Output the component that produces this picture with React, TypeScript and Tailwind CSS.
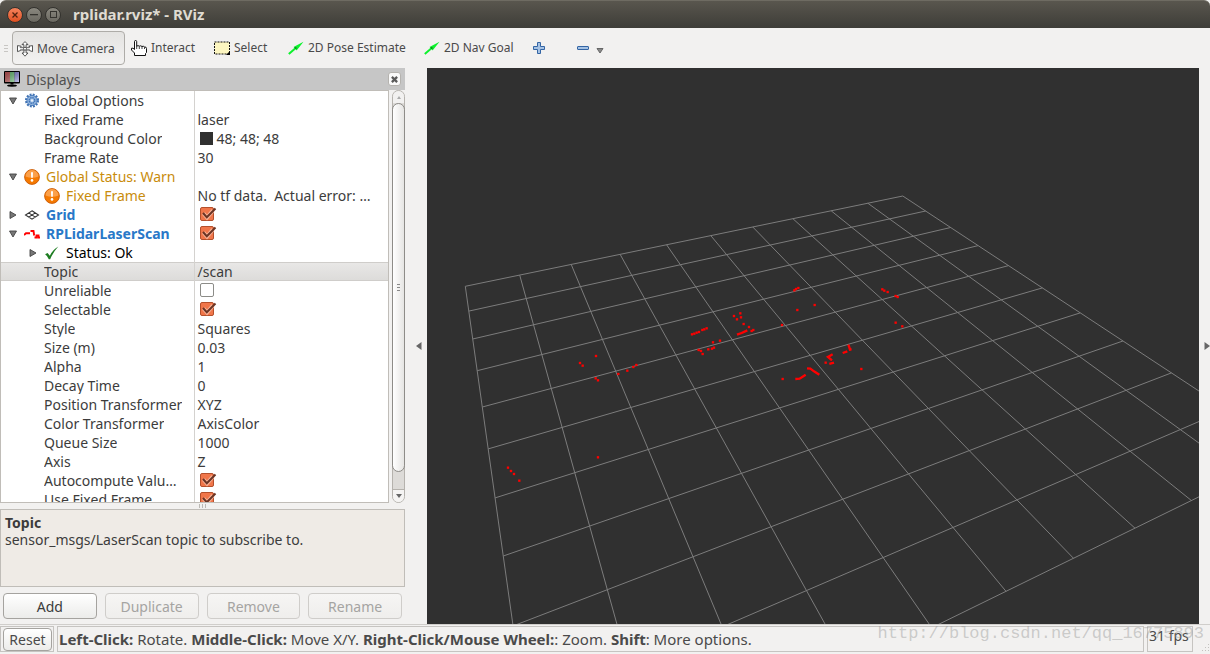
import React from "react";

/* ---------- icons ---------- */

function MoveIcon() {
  return (
    <svg width="16" height="16" viewBox="0 0 16 16" fill="#fff" stroke="#444" strokeWidth="0.9" strokeLinejoin="round" className="shrink-0">
      <path d="M8 .6 11 3.6H9.1V6.6H12.4V5.2H11.8L15.5 4.6V10.6L12.6 9.6V8.9H9.1V12H11L8 15.2 5 12H6.9V8.9H3.4V9.6L.5 10.6V4.6L4.2 5.2 3.2 6.6H6.9V3.6H5Z" />
      <path d="M3.2 6.6h9.6M3.2 8.9h9.6" stroke="#888" strokeWidth="0.7" />
      <circle cx="8" cy="7.7" r="1.5" />
    </svg>
  );
}

function HandIcon() {
  return (
    <svg width="16" height="16" viewBox="0 0 16 16" fill="#fff" stroke="#111" strokeWidth="1" strokeLinejoin="round" className="shrink-0">
      <path d="M3.5 9.500V1.600Q3.500.5 4.600.5T5.700 1.600V6.200Q7 5 8.300 6.200 9.700 5.300 11 6.500 12.300 5.700 13.500 7 15.500 6.700 15.500 8.500V12.500L14.500 13.500V15.500H3.500V13L.5 10V8.300Q2 7.500 3.500 9.500Z" />
      <path d="M5.700 6V9M8.300 6.500V9M11 6.800V9M13.500 7.200V9" strokeWidth="0.800" />
    </svg>
  );
}

function SelectIcon() {
  return (
    <svg width="16" height="14" viewBox="0 0 16 14" className="shrink-0">
      <rect x="0.500" y="1" width="15" height="12" fill="#fdf6c0" stroke="#111" strokeDasharray="2 1" />
      <path d="M16 10v4h-4Z" fill="#000" />
    </svg>
  );
}

function ArrowIcon() {
  return (
    <svg width="16" height="14" viewBox="0 0 16 14" className="shrink-0">
      <path d="M.8 13 8 6.800" stroke="#0cf22c" strokeWidth="2" />
      <path d="M15.500.8 5.500 6 7.500 7.200 8.600 9.400Z" fill="#0cf22c" />
      <path d="M6 6.300 8.500 6.300 8.300 8.800Z" fill="#0a7a1c" />
    </svg>
  );
}

function PlusIcon() {
  return (
    <svg width="12" height="12" viewBox="0 0 12 12" className="shrink-0">
      <path d="M4.500.5h3v4h4v3h-4v4h-3v-4h-4v-3h4Z" fill="#a5c2e4" stroke="#3465a4" />
    </svg>
  );
}

function MinusIcon() {
  return (
    <svg width="12" height="4" viewBox="0 0 12 4" className="shrink-0">
      <rect x="0.500" y="0.500" width="11" height="3" rx="0.500" fill="#a5c2e4" stroke="#3465a4" />
    </svg>
  );
}

function MonitorIcon() {
  return (
    <svg width="16" height="16" viewBox="0 0 16 16" className="shrink-0">
      <defs>
        <linearGradient id="screen" x1="0" y1="0" x2="1" y2="1">
          <stop offset="0" stopColor="#000" stopOpacity="0.250" />
          <stop offset="1" stopColor="#fff" stopOpacity="0.550" />
        </linearGradient>
      </defs>
      <rect width="16" height="12.500" rx="1" fill="#000" />
      <rect x="1" y="1" width="5" height="10" fill="#c85a5a" />
      <rect x="6" y="1" width="4.500" height="10" fill="#6cc878" />
      <rect x="10.500" y="1" width="4.500" height="10" fill="#7878d2" />
      <rect x="1" y="1" width="14" height="10" fill="url(#screen)" />
      <path d="M6.500 12h3v1.500h-3Z" fill="#000" />
      <ellipse cx="8" cy="14.600" rx="5" ry="1.200" fill="#000" />
    </svg>
  );
}

function GearIcon() {
  return (
    <svg width="16" height="15" viewBox="0 0 16 16" className="shrink-0">
      <circle cx="8" cy="8" r="6.300" fill="none" stroke="#3f72b4" strokeWidth="2.400" strokeDasharray="2 1.300" />
      <circle cx="8" cy="8" r="5.400" fill="#8fb3de" stroke="#3f72b4" strokeWidth="0.900" />
      <circle cx="8" cy="8" r="3" fill="none" stroke="#3f72b4" strokeWidth="1.300" strokeDasharray="1.600 0.750" />
      <circle cx="8" cy="8" r="1.300" fill="#e8f0fa" />
    </svg>
  );
}

function WarnIcon() {
  return (
    <svg width="16" height="16" viewBox="0 0 16 16" className="shrink-0">
      <circle cx="8" cy="8" r="7.400" fill="#f57900" stroke="#c85a06" strokeWidth="0.900" />
      <path d="M1.500 7.500a6.500 6.500 0 0 1 13 0Q8 10 1.500 7.500Z" fill="#fba04a" />
      <path d="M7 3.200h2l-.2 5.500H7.200Z" fill="#fff" />
      <circle cx="8" cy="11.400" r="1.300" fill="#fff" />
    </svg>
  );
}

function GridIcon() {
  return (
    <svg width="16" height="10" viewBox="0 0 16 10" fill="none" stroke="#333" strokeWidth="1.100" className="shrink-0">
      <path d="M8 .8 14.500 5 8 9.200 1.500 5ZM4.700 2.900 11.300 7.100M11.300 2.900 4.700 7.100" />
    </svg>
  );
}

function ScanIcon() {
  return (
    <svg width="16" height="10" viewBox="0 0 16 10" fill="none" stroke="#f00" strokeWidth="1.900" className="shrink-0">
      <path d="M0 6 2 4.200H6M6.500 2H9.500L10.200 6.500M10.500 8.500H12.500V5.500M13 6.500H14.500V8.500H16" />
    </svg>
  );
}

function CheckIcon() {
  return (
    <svg width="16" height="14" viewBox="0 0 16 14" className="shrink-0">
      <path d="M1 8.300 3.600 7 5.800 9.800Q9 3.500 14.300.6 9 6.400 6.200 13.200H4.800Q3.600 10 1 8.300Z" fill="#1e7d22" />
    </svg>
  );
}

function Disclosure({ open, label }: { open: boolean; label: string }) {
  return (
    <button type="button" aria-label={label} aria-expanded={open} className="flex h-4 w-4 shrink-0 items-center justify-center">
      <svg width="8" height="8" viewBox="0 0 8 8" fill="#777" stroke="#444" strokeWidth="0.900">
        <path d={open ? "M.5 1h7L4 7Z" : "M1 .5v7L7 4Z"} />
      </svg>
    </button>
  );
}

/* ---------- display tree ---------- */

type Row = {
  name: string;
  value?: string;
  check?: boolean;
  swatch?: boolean;
  open?: boolean;
  level?: "group" | "nested" | "leaf";
  icon?: React.ReactNode;
  tone?: "normal" | "warn" | "display" | "black";
  selected?: boolean;
};

const rows: Row[] = [
  { name: "Global Options", level: "group", open: true, icon: <GearIcon /> },
  { name: "Fixed Frame", value: "laser" },
  { name: "Background Color", value: "48; 48; 48", swatch: true },
  { name: "Frame Rate", value: "30" },
  { name: "Global Status: Warn", level: "group", open: true, icon: <WarnIcon />, tone: "warn" },
  { name: "Fixed Frame", level: "nested", icon: <WarnIcon />, tone: "warn", value: "No tf data.  Actual error: …" },
  { name: "Grid", level: "group", open: false, icon: <GridIcon />, tone: "display", check: true },
  { name: "RPLidarLaserScan", level: "group", open: true, icon: <ScanIcon />, tone: "display", check: true },
  { name: "Status: Ok", level: "nested", open: false, icon: <CheckIcon />, tone: "black" },
  { name: "Topic", value: "/scan", selected: true },
  { name: "Unreliable", check: false },
  { name: "Selectable", check: true },
  { name: "Style", value: "Squares" },
  { name: "Size (m)", value: "0.03" },
  { name: "Alpha", value: "1" },
  { name: "Decay Time", value: "0" },
  { name: "Position Transformer", value: "XYZ" },
  { name: "Color Transformer", value: "AxisColor" },
  { name: "Queue Size", value: "1000" },
  { name: "Axis", value: "Z" },
  { name: "Autocompute Valu…", check: true },
  { name: "Use Fixed Frame", check: true },
];

const tones = {
  normal: "text-[#3c3c3c]",
  warn: "text-[#c98c0c]",
  display: "font-bold text-[#2878c8]",
  black: "text-black",
};

const indents = { group: "pl-1", nested: "pl-6", leaf: "pl-[43px]" };

function Check({ checked, label }: { checked: boolean; label: string }) {
  return (
    <span className="relative ml-0.5 block h-[15px] w-[14px]">
      <input
        type="checkbox"
        aria-label={label}
        defaultChecked={checked}
        className="peer block h-[14px] w-[14px] appearance-none rounded-[2px] border border-[#8c8c88] bg-white checked:border-[#b4502c] checked:bg-[#f0764a]"
      />
      <svg width="17" height="14" viewBox="0 0 17 14" className="pointer-events-none absolute top-0 left-0 hidden peer-checked:block" fill="none">
        <path d="M3.500 6.500 7 10.500 13 3.500" stroke="#f9b59a" strokeWidth="4" />
        <path d="M3 6 6.800 10.200 15.500 1.500" stroke="#6b3424" strokeWidth="2" />
      </svg>
    </span>
  );
}

function TreeRow({ row }: { row: Row }) {
  const level = row.level ?? "leaf";
  return (
    <tr className={row.selected ? "bg-linear-to-b from-[#e9e8e7] to-[#dcdbd9] shadow-[inset_0_1px_0_#cfcdca,inset_0_-1px_0_#cfcdca]" : ""}>
      <td className="h-[19px] p-0">
        <div className={`flex h-[19px] items-center overflow-hidden pr-1 ${indents[level]} ${tones[row.tone ?? "normal"]}`}>
          {row.open !== undefined && <Disclosure open={row.open} label={`Toggle ${row.name}`} />}
          {row.icon && (
            <span className={`mr-1.5 flex w-4 shrink-0 justify-center ${level === "nested" && row.open === undefined ? "ml-[19px]" : "ml-[3px]"}`}>
              {row.icon}
            </span>
          )}
          <span className="truncate">{row.name}</span>
        </div>
      </td>
      <td className="h-[19px] border-l border-[#d4d2cf] p-0">
        <div className="flex h-[19px] items-center overflow-hidden pl-[3px] whitespace-pre">
          {row.swatch && <span className="mr-1 ml-0.5 h-[13px] w-[13px] bg-[#303030]" />}
          {row.check !== undefined && <Check checked={row.check} label={row.name} />}
          {row.value}
        </div>
      </td>
    </tr>
  );
}

/* ---------- 3D view ---------- */

/* Perspective projection of ground-plane cell corners (u, v in 0..10). */
function project(u: number, v: number) {
  const w = 1 + 0.0278 * u - 0.0561 * v;
  const x = (465.3 + 68.85 * u - 22.81 * v) / w;
  const y = (286.3 - 3.58 * u + 7.34 * v) / w;
  return `${x.toFixed(1)} ${y.toFixed(1)}`;
}

const gridPath = Array.from(
  { length: 11 },
  (_, i) => `M${project(i, 0)}L${project(i, 10)}M${project(0, i)}L${project(10, i)}`,
).join("");

/* Laser returns, in thirds of a pixel from each cluster's origin. */
const clusters = [
  {
    x: 560,
    y: 280,
    dots: [[60, 249], [68, 257], [108, 228], [107, 295], [114, 301], [175, 282], [202, 272], [220, 261], [229, 255], [396, 163], [403, 161], [410, 158], [417, 156], [427, 150], [433, 148], [440, 145], [416, 210], [423, 213], [428, 222], [445, 208], [456, 206], [462, 203], [459, 187], [480, 182], [522, 108], [541, 100], [531, 118], [543, 112], [551, 132], [567, 141], [575, 153], [580, 150]],
    lines: "M531 164 545 159 562 151",
  },
  {
    x: 760,
    y: 280,
    dots: [[103, 31], [108, 27], [115, 24], [112, 90], [164, 75], [66, 135], [367, 28], [373, 32], [383, 36], [407, 48], [413, 51], [407, 128], [427, 139], [197, 248], [304, 267], [68, 297], [271, 208]],
    lines: "M265 194 268 202 271 212M248 219 262 214M218 223 204 231 216 241M208 252 222 248M106 297 119 296 137 284M141 265 151 266 162 274 178 284",
  },
  { x: 427, y: 400, dots: [[243, 203], [252, 213], [261, 222], [277, 242], [513, 172]], lines: "" },
];

function Viewport() {
  return (
    <svg className="block h-full w-full" viewBox="427 68 772 556" preserveAspectRatio="xMidYMid slice" role="img" aria-label="3D view">
      <path d={gridPath} fill="none" stroke="#7c7c7c" strokeWidth="1" />
      {clusters.map((c) => (
        <g key={`${c.x}-${c.y}`} transform={`translate(${c.x} ${c.y}) scale(0.3333)`} fill="#f00">
          {c.dots.map(([x, y]) => (
            <rect key={`${x}-${y}`} x={x - 3.5} y={y - 3.5} width="7" height="7" />
          ))}
          {c.lines && <path d={c.lines} fill="none" stroke="#f00" strokeWidth="7" />}
        </g>
      ))}
    </svg>
  );
}

/* ---------- window ---------- */

const tool = "flex h-[34px] shrink-0 items-center gap-1 whitespace-nowrap px-[5px]";
const button =
  "h-[26px] rounded-[4px] border bg-linear-to-b from-white to-[#ececea] text-center disabled:border-[#cfcdca] disabled:from-[#f6f5f4] disabled:to-[#efeeec] disabled:text-[#a5a4a2]";

function CollapseArrow({ dir }: { dir: "left" | "right" }) {
  return (
    <svg width="6" height="8" viewBox="0 0 6 8" fill="#666">
      <path d={dir === "left" ? "M5.500 0v8L0 4Z" : "M.5 0v8L6 4Z"} />
    </svg>
  );
}

export default function App() {
  return (
    <div className="relative flex h-screen flex-col overflow-hidden bg-[#f2f1f0] font-['Noto_Sans',sans-serif] text-sm leading-[17px] text-[#3c3c3c]">
      <header className="flex h-7 shrink-0 items-center gap-[3px] rounded-t-md border-t border-[#6e6b62] bg-linear-to-b from-[#59564e] to-[#3e3d38] pl-[7px]">
        <button type="button" aria-label="Close" className="flex h-4 w-4 items-center justify-center rounded-full border border-[#33322e] bg-linear-to-b from-[#f5835c] to-[#e0501f]">
          <svg width="6" height="6" viewBox="0 0 6 6" stroke="#50220f" strokeWidth="1.300"><path d="M.5.5l5 5M5.500.5l-5 5" /></svg>
        </button>
        <button type="button" aria-label="Minimize" className="flex h-4 w-4 items-center justify-center rounded-full border border-[#33322e] bg-linear-to-b from-[#8a887f] to-[#6b6961]">
          <svg width="8" height="2" viewBox="0 0 8 2"><rect width="8" height="1.300" fill="#35342f" /></svg>
        </button>
        <button type="button" aria-label="Maximize" className="flex h-4 w-4 items-center justify-center rounded-full border border-[#33322e] bg-linear-to-b from-[#8a887f] to-[#6b6961]">
          <svg width="7" height="7" viewBox="0 0 7 7" fill="none" stroke="#35342f"><rect x="0.500" y="0.500" width="6" height="6" /></svg>
        </button>
        <h1 className="ml-[9px] text-[15px] font-bold text-[#dfdbd2]">rplidar.rviz* - RViz</h1>
      </header>

      <nav className="flex h-10 shrink-0 items-center pl-1 text-xs text-[#4a4a4a]">
        <span className="mr-1 flex w-1 flex-col gap-0.5">
          <i className="h-px bg-[#c8c6c3]" />
          <i className="h-px bg-[#c8c6c3]" />
          <i className="h-px bg-[#c8c6c3]" />
        </span>
        <button type="button" aria-pressed="true" className={`${tool} w-[113px] rounded-[4px] border border-[#aeaca8] bg-linear-to-b from-[#e4e3e1] to-[#f3f2f1] pt-0.5 pl-1`}>
          <MoveIcon /> Move Camera
        </button>
        <button type="button" className={`${tool} ml-px w-[83px]`}><HandIcon /> Interact</button>
        <button type="button" className={`${tool} w-[74px]`}><SelectIcon /> Select</button>
        <button type="button" className={`${tool} w-[136px]`}><ArrowIcon /> 2D Pose Estimate</button>
        <button type="button" className={`${tool} w-[109px]`}><ArrowIcon /> 2D Nav Goal</button>
        <button type="button" aria-label="Add tool" className={tool}><PlusIcon /></button>
        <button type="button" aria-label="Remove tool" className={`${tool} ml-[22px] gap-[7px]`}>
          <MinusIcon />
          <svg width="8" height="6" viewBox="0 0 8 6" fill="#8a8a8a" stroke="#666" className="mt-1.5"><path d="M1 .5h6L4 5Z" /></svg>
        </button>
      </nav>

      <div className="flex min-h-0 flex-1">
        <aside className="flex w-[405px] shrink-0 flex-col">
          <div className="flex h-[22px] shrink-0 items-center bg-[#c6c6c6] pr-1 pl-1 text-[#505050]">
            <MonitorIcon />
            <h2 className="ml-1.5 flex-1 pt-px text-sm">Displays</h2>
            <button type="button" aria-label="Close panel" className="flex h-[14px] w-[13px] items-center justify-center rounded-[3px] border border-[#b5b3af] bg-[#fafafa]">
              <svg width="7" height="7" viewBox="0 0 8 8" stroke="#5a5a5a" strokeWidth="2.600"><path d="M1 1l6 6M7 1 1 7" /></svg>
            </button>
          </div>

          <div className="flex min-h-0 flex-1">
            <div className="min-w-0 flex-1 overflow-hidden border border-[#c0bdb8] bg-white">
              <table className="w-full table-fixed border-collapse">
                <colgroup>
                  <col className="w-[193px]" />
                  <col />
                </colgroup>
                <tbody>
                  {rows.map((row, i) => (
                    <TreeRow key={i} row={row} />
                  ))}
                </tbody>
              </table>
            </div>
            <div className="ml-[3px] flex w-[13px] flex-col rounded-full border border-[#b5b2ad] bg-[#dddbd8]">
              <div className="flex h-3 items-center justify-center rounded-t-full bg-[#f2f1f0]">
                <svg width="4" height="3" viewBox="0 0 4 3" fill="#aaa"><path d="M0 3h4L2 0Z" /></svg>
              </div>
              <div className="-mx-px flex flex-1 flex-col items-center justify-center gap-0.5 rounded-full border border-[#8e8c88] bg-linear-to-r from-white to-[#e6e5e3]">
                <i className="h-px w-[3px] bg-[#888]" />
                <i className="h-px w-[3px] bg-[#888]" />
                <i className="h-px w-[3px] bg-[#888]" />
              </div>
              <div className="h-[17px]" />
              <div className="flex h-[13px] items-center justify-center rounded-b-full border-t border-[#b5b2ad] bg-[#f5f4f3]">
                <svg width="6" height="4" viewBox="0 0 6 4" fill="#666"><path d="M0 0h6L3 4Z" /></svg>
              </div>
            </div>
          </div>

          <div className="flex h-1.5 shrink-0 items-center justify-center gap-0.5">
            <i className="h-1 w-px bg-[#bbb9b5]" />
            <i className="h-1 w-px bg-[#bbb9b5]" />
            <i className="h-1 w-px bg-[#bbb9b5]" />
          </div>

          <section className="h-[78px] shrink-0 border border-[#c0bdb8] bg-[#efebe6] px-1 pt-1">
            <h3 className="text-sm leading-[17px] font-bold">Topic</h3>
            <p>sensor_msgs/LaserScan topic to subscribe to.</p>
          </section>

          <div className="grid shrink-0 grid-cols-4 gap-2 px-[3px] pt-1.5 pb-[5px]">
            <button type="button" className={`${button} border-[#a5a39f]`}>Add</button>
            <button type="button" disabled className={button}>Duplicate</button>
            <button type="button" disabled className={button}>Remove</button>
            <button type="button" disabled className={button}>Rename</button>
          </div>
        </aside>

        <button type="button" aria-label="Hide left dock" className="flex w-[22px] shrink-0 items-center justify-center pl-1.5">
          <CollapseArrow dir="left" />
        </button>
        <main className="min-w-0 flex-1 bg-[#303030]">
          <Viewport />
        </main>
        <button type="button" aria-label="Hide right dock" className="flex w-[11px] shrink-0 items-center justify-end">
          <CollapseArrow dir="right" />
        </button>
      </div>

      <footer className="flex h-[30px] shrink-0 gap-[3px] border-t border-[#d0cecb] pt-px pb-0.5 text-[#4a4a4a]">
        <div className="flex w-[54px] shrink-0 items-center border border-[#c6c4c1] pl-0.5">
          <button type="button" className="h-[23px] w-[49px] rounded-[4px] border border-[#a5a39f] bg-linear-to-b from-white to-[#ececea]">Reset</button>
        </div>
        <p className="flex-1 truncate border border-[#c6c4c1] pt-1 pl-px text-[15px]">
          <b>Left-Click:</b> Rotate. <b>Middle-Click:</b> Move X/Y. <b>Right-Click/Mouse Wheel:</b>: Zoom. <b>Shift</b>: More options.
        </p>
        <div className="w-[46px] shrink-0 border border-[#c6c4c1] pl-px whitespace-nowrap">31 fps</div>
        <div className="flex w-[14px] shrink-0 items-end justify-end">
          <svg width="9" height="9" viewBox="0 0 9 9" fill="#c4c2bf">
            <path d="M7 1h1v1H7ZM4 4h1v1H4ZM7 4h1v1H7ZM1 7h1v1H1ZM4 7h1v1H4ZM7 7h1v1H7Z" />
          </svg>
        </div>
      </footer>

      <span className="pointer-events-none absolute right-1.5 bottom-2 font-['Liberation_Mono',monospace] text-[17px] leading-6 text-[#8c8c8c]/40">
        http://blog.csdn.net/qq_16775893
      </span>
    </div>
  );
}
